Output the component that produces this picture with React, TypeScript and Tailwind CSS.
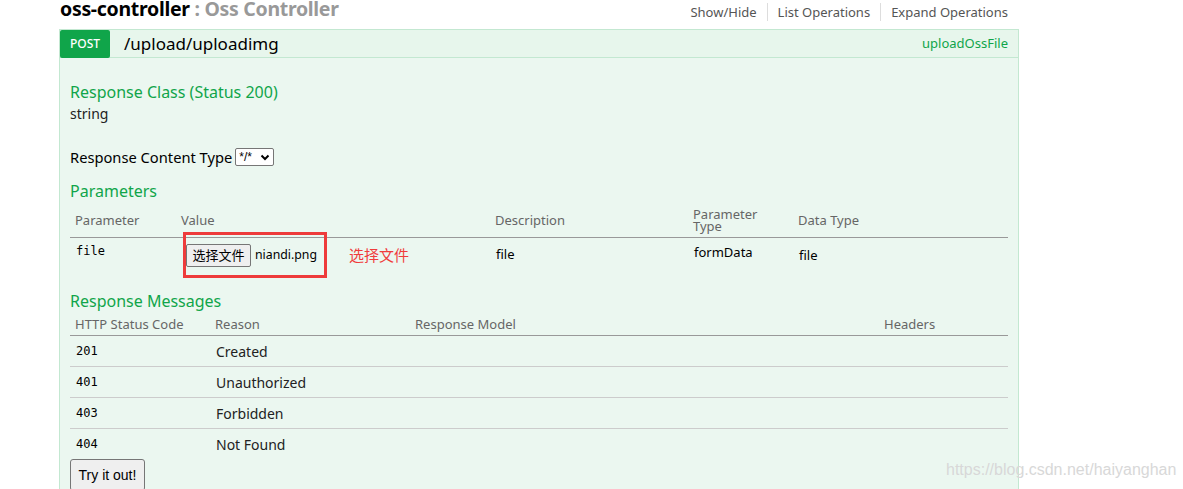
import React from 'react';

const msgs = [
  { code: '201', reason: 'Created' },
  { code: '401', reason: 'Unauthorized' },
  { code: '403', reason: 'Forbidden' },
  { code: '404', reason: 'Not Found' },
];

export default function App() {
  return (
    <div className="relative h-[489px] w-[1183px] overflow-hidden bg-white font-['Noto_Sans','Noto_Sans_CJK_SC',sans-serif] text-[#000]">
      <div className="ml-[59px] w-[960px]">
        {/* Resource header */}
        <div className="flex h-[29px] items-start justify-between">
          <h2 className="-mt-[3px] pl-[1px] text-[19.5px] leading-[24px] font-bold tracking-[-0.3px]">
            oss-controller<span className="text-[#999]"> : Oss Controller</span>
          </h2>
          <ul className="mt-[3px] flex pr-[11px] text-[13px] leading-[18px] text-[#555]">
            <li className="pr-[10px]">Show/Hide</li>
            <li className="border-l border-[#ddd] px-[10px]">List Operations</li>
            <li className="border-l border-[#ddd] pl-[10px]">Expand Operations</li>
          </ul>
        </div>

        {/* Operation */}
        <div className="border border-[#c3e8d1]">
          <div className="flex h-[28px] items-center border-b border-[#c3e8d1] bg-[#e7f6ec]">
            <span className="flex h-[28px] w-[50px] items-center justify-center rounded-[2px] bg-[#10a54a] text-[12px] font-medium text-white">POST</span>
            <span className="ml-[14px] text-[17px] leading-[24px]">/upload/uploadimg</span>
            <span className="ml-auto pr-[10px] text-[13px] text-[#10a54a]">uploadOssFile</span>
          </div>

          <div className="h-[460px] bg-[#ebf7f0] px-[10px]">
            <h4 className="pt-[23px] text-[16px] leading-[22px] text-[#10a54a]">Response Class (Status 200)</h4>
            <div className="text-[14px] leading-[22px] text-[#222]">string</div>

            <div className="mt-[21px] flex items-center text-[14.7px] leading-[22px]">
              <span>Response Content Type</span>
              <span className="ml-[3px] flex h-[18px] w-[39px] items-center justify-between rounded-[2px] border border-[#767676] bg-white pr-[3px] pl-[3px] font-['Liberation_Sans',sans-serif] text-[12px] leading-none">
                */*
                <svg width="10" height="10" viewBox="0 0 10 10" fill="none" stroke="#000" strokeWidth="2">
                  <path d="M1.5 3.5 5 7l3.5-3.5" />
                </svg>
              </span>
            </div>

            <h4 className="mt-[12px] text-[16px] leading-[22px] text-[#10a54a]">Parameters</h4>

            <div className="grid h-[36px] grid-cols-[106px_314px_198px_105px_1fr] items-center border-b border-[#999] pt-[2px] text-[13px] text-[#666]">
              <div className="pl-[5px]">Parameter</div>
              <div className="pl-[5px]">Value</div>
              <div className="pl-[5px]">Description</div>
              <div className="-mt-[2px] pl-[5px] leading-[12px]">Parameter<br />Type</div>
              <div className="pl-[5px]">Data Type</div>
            </div>
            <div className="grid h-[42px] grid-cols-[106px_314px_198px_105px_1fr] items-start text-[13px]">
              <div className="pt-[5px] pl-[6px] font-['DejaVu_Sans_Mono',monospace] text-[12px] leading-[16px]">file</div>
              <div className="relative flex items-center pt-[6px] pl-[10px]">
                <span className="flex h-[23px] w-[65px] items-center justify-center rounded-[2px] border border-[#767676] bg-[#efefef] font-['Liberation_Sans','Noto_Sans_CJK_SC',sans-serif] text-[13px]">选择文件</span>
                <span className="ml-[4px] text-[12.3px]">niandi.png</span>
                <div className="absolute top-[-6px] left-[7px] h-[46px] w-[144px] border-[3px] border-[#ee3b3b]" />
                <span className="absolute top-[7px] left-[173px] text-[15px] leading-[20px] text-[#f03c3c]">选择文件</span>
              </div>
              <div className="pt-[7px] pl-[6px] leading-[18px]">file</div>
              <div className="pt-[5px] pl-[6px] leading-[18px]">formData</div>
              <div className="pt-[8px] pl-[6px] leading-[18px]">file</div>
            </div>

            <h4 className="mt-[10px] text-[16px] leading-[22px] text-[#10a54a]">Response Messages</h4>
            <div className="grid h-[24px] grid-cols-[140px_200px_469px_1fr] items-end border-b border-[#999] pb-[1px] text-[13px] text-[#666]">
              <div className="pl-[5px]">HTTP Status Code</div>
              <div className="pl-[5px]">Reason</div>
              <div className="pl-[5px]">Response Model</div>
              <div className="pl-[5px]">Headers</div>
            </div>
            {msgs.map((m, i) => (
              <div
                key={m.code}
                className={
                  i < msgs.length - 1
                    ? 'grid h-[31px] grid-cols-[140px_200px_469px_1fr] items-center border-b border-[#ccc]'
                    : 'grid h-[30px] grid-cols-[140px_200px_469px_1fr] items-center'
                }
              >
                <div className="pl-[6px] font-['DejaVu_Sans_Mono',monospace] text-[12px]">{m.code}</div>
                <div className="pl-[6px] text-[14px] text-[#222]">{m.reason}</div>
                <div />
                <div />
              </div>
            ))}

            <button className="flex h-[32px] w-[75px] items-center justify-center rounded-[3px] border border-[#767676] bg-[#efefef] font-['Liberation_Sans',sans-serif] text-[14px]">
              Try it out!
            </button>
          </div>
        </div>
      </div>

      <div className="absolute top-[459px] left-[946px] font-['Liberation_Sans',sans-serif] text-[16px] leading-[22px] text-[#d8d8d8]">
        https://blog.csdn.net/haiyanghan
      </div>
    </div>
  );
}
